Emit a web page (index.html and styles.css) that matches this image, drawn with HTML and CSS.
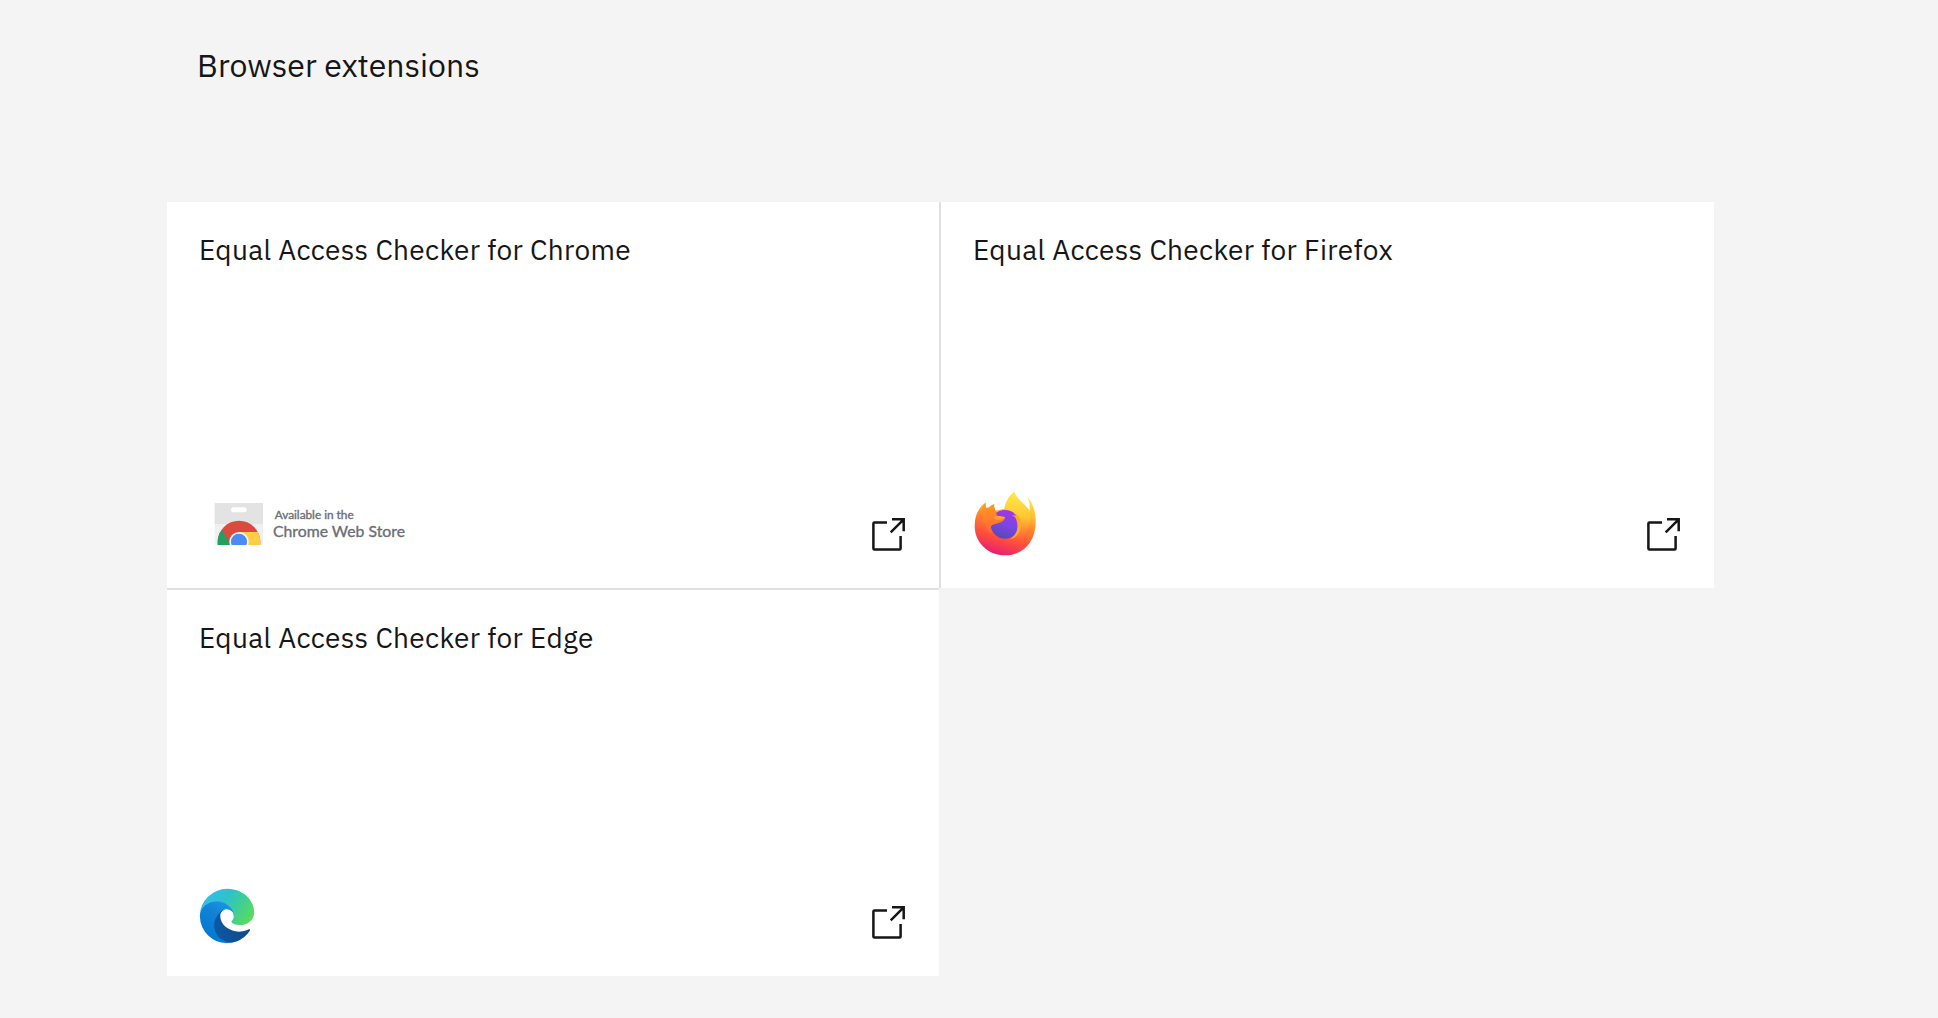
FILE: index.html
```html
<!DOCTYPE html>
<html lang="en">
<head>
    <meta charset="UTF-8">
    <meta name="viewport" content="width=device-width, initial-scale=1.0">
    <title>Browser extensions</title>
    <link rel="stylesheet" href="styles.css">
</head>
<body>
    <main class="container">
        <h2>Browser extensions</h2>

        <div class="cards">
            <!-- Chrome -->
            <a class="card card-chrome" href="#">
                <h3>Equal Access Checker for Chrome</h3>
                <div class="card-footer">
                    <svg class="logo-chrome" viewBox="-3 0 660 198" role="img" aria-label="Chrome Web Store">
                        <clipPath id="bag"><path d="M43 39H189V160a5 5 0 0 1-5 5H48a5 5 0 0 1-5-5z"/></clipPath>
                        <clipPath id="ball"><circle cx="117" cy="156" r="64"/></clipPath>
                        <g clip-path="url(#bag)">
                            <path fill="#f0f0f0" d="M43 39H189V165H43z"/>
                            <path fill="#e3e3e3" d="M43 39H189V102H43z"/>
                            <rect x="93" y="52" width="47" height="15" rx="7.5" fill="#fff"/>
                            <circle cx="117" cy="156" r="64" fill="#db4a3f"/>
                            <path fill="#1fa261" d="M66 120L93 165V200H40V150z" clip-path="url(#ball)"/>
                            <path fill="#ffce44" d="M117 126H174L190 165H117z" clip-path="url(#ball)"/>
                            <circle cx="117" cy="155" r="29" fill="#f5f5f5"/>
                            <circle cx="117" cy="155" r="24" fill="#4b8bf4"/>
                        </g>
                        <text class="badge-small" x="224" y="87" textLength="237" lengthAdjust="spacingAndGlyphs">Available in the</text>
                        <text class="badge-large" x="219" y="142" textLength="396" lengthAdjust="spacingAndGlyphs">Chrome Web Store</text>
                    </svg>
                    <svg class="launch" viewBox="0 0 34 34">
                        <path d="M15 4.4H2.4a1 1 0 0 0-1 1V30.6a1 1 0 0 0 1 1H27.6a1 1 0 0 0 1-1V18M20 1.3H31.7V13.3M31.7 1.3L18.7 14.3"/>
                    </svg>
                </div>
            </a>

            <!-- Firefox -->
            <a class="card card-firefox" href="#">
                <h3>Equal Access Checker for Firefox</h3>
                <div class="card-footer">
                    <svg class="logo-firefox" viewBox="42 33 186 195" role="img" aria-label="Firefox">
                        <defs>
                            <linearGradient id="ff-body" x1=".75" y1="0" x2=".45" y2="1">
                                <stop offset="0" stop-color="#fff14a"/>
                                <stop offset=".3" stop-color="#ffbf33"/>
                                <stop offset=".5" stop-color="#ff852c"/>
                                <stop offset=".78" stop-color="#ff4a3e"/>
                                <stop offset="1" stop-color="#ea2070"/>
                            </linearGradient>
                            <linearGradient id="ff-flame" x1=".4" y1="0" x2=".4" y2="1">
                                <stop offset="0" stop-color="#ffe84d"/>
                                <stop offset=".5" stop-color="#ffc832"/>
                                <stop offset="1" stop-color="#ff7a30" stop-opacity="0"/>
                            </linearGradient>
                            <linearGradient id="ff-globe" x1=".7" y1="0" x2=".35" y2="1">
                                <stop offset="0" stop-color="#a235e8"/>
                                <stop offset=".5" stop-color="#7b46e5"/>
                                <stop offset="1" stop-color="#5848b5"/>
                            </linearGradient>
                            <linearGradient id="ff-head" x1=".3" y1="0" x2=".4" y2="1">
                                <stop offset="0" stop-color="#ff9a23"/>
                                <stop offset="1" stop-color="#ff6434"/>
                            </linearGradient>
                        </defs>
                        <path fill="url(#ff-body)" d="M77 67C76 75 77 80 79 84Q84 82 87 83C91 78 97 75 103 72C101 79 103 85 107 92L134 86C138 62 149 45 163 36C167 52 182 62 194 75C200 80 205 86 209 92C210 77 208 65 203 52C220 71 227 97 227 126C227 185 190 226 136 226C84 226 44 187 44 137C44 105 57 82 77 67z"/>
                        <path fill="url(#ff-flame)" d="M163 36C167 52 182 62 194 75C212 94 216 119 205 143C194 171 175 181 148 183C172 168 181 147 177 124C173 105 153 98 133 86C138 62 149 45 163 36z"/>
                        <circle cx="135" cy="133" r="43" fill="url(#ff-globe)"/>
                        <path fill="#ffa62e" d="M155 94C181 106 190 126 180 150C176 163 166 174 151 178C168 164 174 149 172 135C171 119 167 110 155 105L171 107C168 101 162 97 155 94z"/>
                        <path fill="url(#ff-head)" d="M77 68C76 76 77 80 79 84Q84 82 87 83C91 78 97 75 103 72C101 80 103 85 107 92Q109 102 112 107L135 111C136 119 127 125 116 129C105 133 98 132 93 139C91 149 95 157 98 162C84 155 76 144 75 130C67 124 62 111 66 96C67 82 71 75 77 68z"/>
                        <path fill="#ffb22c" d="M104 110C115 106 127 109 135 112Q129 120 112 120Q98 116 104 110z" opacity=".65"/>
                    </svg>
                    <svg class="launch" viewBox="0 0 34 34">
                        <path d="M15 4.4H2.4a1 1 0 0 0-1 1V30.6a1 1 0 0 0 1 1H27.6a1 1 0 0 0 1-1V18M20 1.3H31.7V13.3M31.7 1.3L18.7 14.3"/>
                    </svg>
                </div>
            </a>

            <!-- Edge -->
            <a class="card card-edge" href="#">
                <h3>Equal Access Checker for Edge</h3>
                <div class="card-footer">
                    <svg class="logo-edge" viewBox="-4 -4 264 264" role="img" aria-label="Edge">
                        <defs>
                            <linearGradient id="edge-dark" x1="0" y1=".5" x2="1" y2=".5">
                                <stop offset="0" stop-color="#0c59a4"/>
                                <stop offset="1" stop-color="#114a8b"/>
                            </linearGradient>
                            <linearGradient id="edge-blue" x1=".8" y1="0" x2=".3" y2="1">
                                <stop offset="0" stop-color="#1b9de2"/>
                                <stop offset=".4" stop-color="#1282d5"/>
                                <stop offset="1" stop-color="#0078d4"/>
                            </linearGradient>
                            <linearGradient id="edge-green" x1="0" y1=".3" x2="1" y2=".7">
                                <stop offset="0" stop-color="#35bdf0"/>
                                <stop offset=".4" stop-color="#2dc2cc"/>
                                <stop offset=".7" stop-color="#40cf91"/>
                                <stop offset="1" stop-color="#5cdc5c"/>
                            </linearGradient>
                        </defs>
                        <path fill="url(#edge-dark)" d="M231 190.5c-3.4 1.8-6.9 3.4-10.5 4.7a101.5 101.5 0 0 1-35.9 6.5c-47.3 0-88.5-32.5-88.5-74.3a31.5 31.5 0 0 1 16.4-27.3c-42.8 1.8-53.8 46.4-53.8 72.5 0 74 68.1 81.4 82.8 81.4 7.9 0 19.8-2.3 27-4.6l1.3-.4a128.3 128.3 0 0 0 66.6-52.8 4 4 0 0 0-5.4-5.7z"/>
                        <path fill="url(#edge-blue)" d="M105.7 241.4a79.2 79.2 0 0 1-22.7-21.3A80.7 80.7 0 0 1 112.5 100c3.1-1.5 8.5-4.1 15.6-4a32.4 32.4 0 0 1 25.7 13 31.9 31.9 0 0 1 6.3 18.7c0-.2 24.5-79.6-80-79.6-43.9 0-80 41.7-80 78.2a130.2 130.2 0 0 0 12.1 56 128 128 0 0 0 156.4 66.7 75.5 75.5 0 0 1-62.8-7.6z"/>
                        <path fill="url(#edge-green)" d="M152.3 148.9c-.9 1-3.4 2.5-3.4 5.6 0 2.6 1.7 5.2 4.8 7.3 14.4 10 41.5 8.7 41.6 8.7 10.7 0 21.1-2.9 30.3-8.3A61.4 61.4 0 0 0 256 109.2c.3-22.4-8-37.3-11.3-43.9C223.5 23.9 177.8 0 128 0A128 128 0 0 0 0 126.2c.5-36.5 36.8-66 80-66 3.5 0 23.5.3 42 10 16.3 8.6 24.9 18.9 30.8 29.2 6.2 10.7 7.3 24.1 7.3 29.5s-2.7 13.3-7.8 20z"/>
                    </svg>
                    <svg class="launch" viewBox="0 0 34 34">
                        <path d="M15 4.4H2.4a1 1 0 0 0-1 1V30.6a1 1 0 0 0 1 1H27.6a1 1 0 0 0 1-1V18M20 1.3H31.7V13.3M31.7 1.3L18.7 14.3"/>
                    </svg>
                </div>
            </a>
        </div>
    </main>
</body>
</html>
```

FILE: styles.css
```css
* {
    margin: 0;
    padding: 0;
    box-sizing: border-box;
}

body {
    background: #f4f4f4;
    color: #161616;
    font-family: "IBM Plex Sans", "Noto Sans", sans-serif;
}

.container {
    width: 1547px;
    margin-left: 167px;
    padding-top: 45px;
}

/* Titles */
h2 {
    height: 157px;
    padding-left: 30px;
    font-size: 32px;
    font-weight: 400;
    line-height: 40px;
}

h3 {
    font-size: 28px;
    font-weight: 400;
    line-height: 36px;
    letter-spacing: 0.32px;
    white-space: nowrap;
}

/* Cards */
.cards {
    display: grid;
    grid-template-columns: 774px 773px;
    grid-template-rows: 388px 386px;
}

.card {
    display: flex;
    flex-direction: column;
    justify-content: space-between;
    height: 386px;
    padding: 30px 33px 32px 32px;
    background: #fff;
    color: inherit;
    text-decoration: none;
}

.card-chrome {
    width: 774px;
    border-right: 2px solid #e0e0e0;
}

.card-edge {
    width: 772px;
    height: 388px;
    margin-top: -2px;
    border-top: 2px solid #e0e0e0;
}

.card-footer {
    display: flex;
    align-items: flex-end;
    justify-content: space-between;
}

/* Logos */
.logo-chrome {
    width: 220px;
    height: 66px;
}

.logo-firefox {
    width: 62px;
    height: 65px;
    margin-left: 1px;
}

.logo-edge {
    width: 56px;
    height: 56px;
}

.badge-small,
.badge-large {
    fill: #6b6e72;
    stroke: #6b6e72;
    stroke-width: 1;
    font-family: Lato, sans-serif;
}

.badge-small {
    font-size: 32px;
}

.badge-large {
    font-size: 47px;
}

.launch {
    width: 34px;
    height: 34px;
    margin-bottom: 4px;
    fill: none;
    stroke: #161616;
    stroke-width: 2.5;
}
```
